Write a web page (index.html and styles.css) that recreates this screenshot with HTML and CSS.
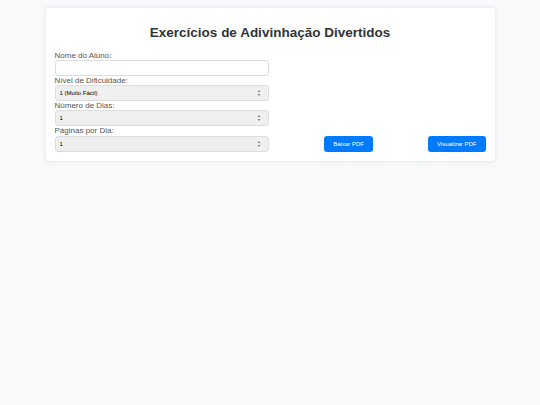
FILE: index.html
```html
<!DOCTYPE html>
<html lang="pt-BR">
<head>
  <meta charset="UTF-8" />
  <meta name="viewport" content="width=device-width, initial-scale=1.0"/>
  <title>Exercícios de Adivinhação Divertidos</title>
  <link rel="stylesheet" href="styles.css">
</head>
<body>

  <div class="container">
    <h1>Exercícios de Adivinhação Divertidos</h1>

    <div class="row">
      <!-- Campos do formulario -->
      <div class="fields">
        <label for="nome">Nome do Aluno:</label>
        <input type="text" id="nome">

        <label for="nivel">Nível de Dificuldade:</label>
        <div class="select-wrap">
          <select id="nivel">
            <option value="1">1 (Muito Fácil)</option>
            <option value="2">2 (Fácil)</option>
            <option value="3">3 (Médio)</option>
            <option value="4">4 (Difícil)</option>
            <option value="5">5 (Muito Difícil)</option>
          </select>
          <svg class="arrows" width="4" height="6" viewBox="0 0 4 6"><path d="M2 0 L3.5 2 H0.5 Z M2 6 L3.5 4 H0.5 Z" fill="#888"/></svg>
        </div>

        <label for="dias">Número de Dias:</label>
        <div class="select-wrap">
          <select id="dias">
            <option>1</option>
            <option>2</option>
            <option>3</option>
            <option>5</option>
            <option>7</option>
          </select>
          <svg class="arrows" width="4" height="6" viewBox="0 0 4 6"><path d="M2 0 L3.5 2 H0.5 Z M2 6 L3.5 4 H0.5 Z" fill="#888"/></svg>
        </div>

        <label for="paginas">Páginas por Dia:</label>
        <div class="select-wrap">
          <select id="paginas">
            <option>1</option>
            <option>2</option>
            <option>3</option>
            <option>4</option>
          </select>
          <svg class="arrows" width="4" height="6" viewBox="0 0 4 6"><path d="M2 0 L3.5 2 H0.5 Z M2 6 L3.5 4 H0.5 Z" fill="#888"/></svg>
        </div>
      </div>

      <!-- Botoes -->
      <div class="actions">
        <button class="btn">Baixar PDF</button>
        <button class="btn">Visualizar PDF</button>
      </div>
    </div>
  </div>

</body>
</html>
```

FILE: styles.css
```css
body {
  background-color: #f8f9fa;
  font-family: 'Liberation Sans', Arial, sans-serif;
  color: #333;
  margin: 0;
  padding: 8px 0;
}

.container {
  background-color: #fff;
  width: 431px;
  margin: 0 auto;
  padding: 9px;
  border-radius: 4px;
  box-shadow: 0 0 5px rgba(0, 0, 0, 0.1);
}

h1 {
  font-size: 13.5px;
  line-height: 16px;
  text-align: center;
  margin: 8px 0 9.5px;
  color: #333;
}

.row {
  display: flex;
  align-items: flex-end;
}

.fields {
  width: 214px;
  display: flex;
  flex-direction: column;
}

label {
  font-size: 8px;
  line-height: 9.3px;
  color: #555;
}

input[type="text"], select {
  width: 100%;
  height: 16px;
  box-sizing: border-box;
  border: 1px solid #ddd;
  border-radius: 3px;
  font-family: inherit;
}

input[type="text"] {
  padding: 2px 4px;
  font-size: 8px;
}

.select-wrap {
  position: relative;
}

select {
  display: block;
  appearance: none;
  padding: 0 4px;
  font-size: 6px;
  color: #000;
  background-color: #efefef;
}

.arrows {
  position: absolute;
  right: 8px;
  top: 5px;
  pointer-events: none;
}

.actions {
  flex: 1;
  display: flex;
  justify-content: flex-end;
  gap: 55px;
}

.btn {
  background-color: #007bff;
  color: #fff;
  border: none;
  border-radius: 3px;
  height: 16px;
  padding: 0 9px;
  font-size: 6px;
  font-family: inherit;
  cursor: pointer;
}
```
